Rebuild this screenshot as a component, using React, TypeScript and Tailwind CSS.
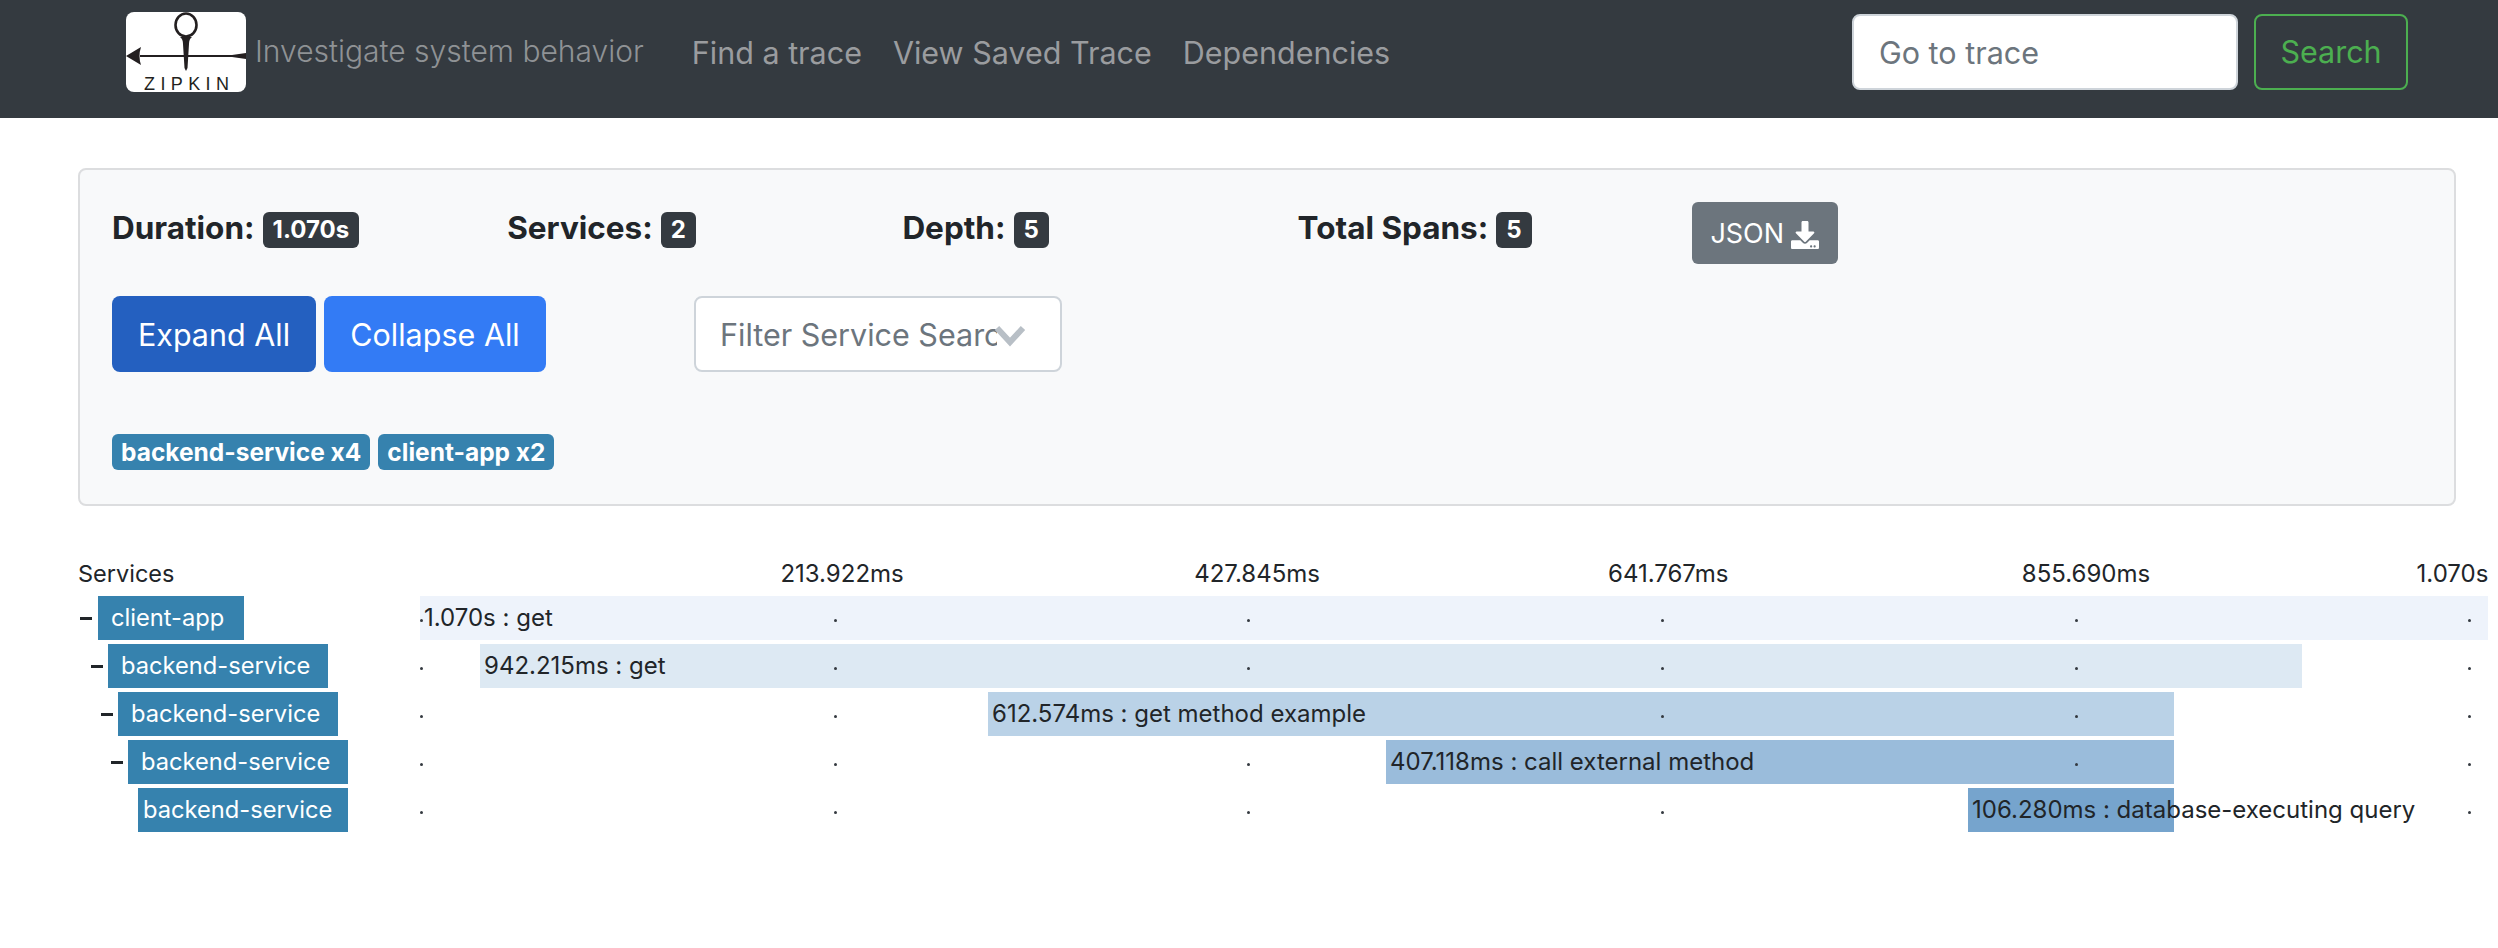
import React from "react";

const font = { fontFamily: "Inter, 'Liberation Sans', sans-serif" };

function Logo() {
  return (
    <div className="w-[120px] h-[80px] bg-white rounded-[8px] shrink-0">
      <svg width="120" height="80" viewBox="0 0 120 80" className="overflow-visible">
        <ellipse cx="60" cy="13" rx="10.5" ry="11.5" fill="none" stroke="#231f20" strokeWidth="2.6" />
        <path d="M54 25 Q57 27 57 32 L58.500 56 L60 59 L61.500 56 L63 32 Q63 27 66 25 Z" fill="#231f20" />
        <path d="M14 43 H106 L120 41 V47 L106 45 H14 Z" fill="#231f20" />
        <path d="M0 44 L15 35 Q12 44 15 53 Z" fill="#231f20" />
        <text x="18" y="78" textLength="85" lengthAdjust="spacing" fontSize="18" fill="#231f20" fontFamily="Liberation Sans, sans-serif">ZIPKIN</text>
      </svg>
    </div>
  );
}

function Stat({ label, value }: { label: string; value: string }) {
  return (
    <div className="w-[395.2px] flex items-center h-[36px] shrink-0">
      <span className="text-[31.5px] font-bold text-[#212529] leading-[36px] mt-[-4px]">{label}</span>
      <span className="ml-[8px] h-[36px] px-[10px] rounded-[6px] bg-[#343a40] text-white text-[24px] font-bold leading-[36px]">{value}</span>
    </div>
  );
}

function Tag({ children }: { children: React.ReactNode }) {
  return <span className="h-[36px] px-[9px] rounded-[6px] bg-[#3682ae] text-white text-[24.5px] font-bold leading-[36px] whitespace-nowrap">{children}</span>;
}

const services = [
  { name: "client-app", minusAt: 2, ml: 20, w: 146, minus: true, pl: 13 },
  { name: "backend-service", minusAt: 13, ml: 30, w: 220, minus: true, pl: 13 },
  { name: "backend-service", minusAt: 23, ml: 40, w: 220, minus: true, pl: 13 },
  { name: "backend-service", minusAt: 33, ml: 50, w: 220, minus: true, pl: 13 },
  { name: "backend-service", minusAt: 0, ml: 60, w: 210, minus: false, pl: 5 },
];

const dotX = [0, 413.7, 827.4, 1241, 1655, 2048];

const bars = [
  { left: 0, w: 2068, color: "#eef3fb", text: "1.070s : get", dots: [0, 1, 2, 3, 4, 5] },
  { left: 60, w: 1822, color: "#dde9f3", text: "942.215ms : get", dots: [0, 1, 2, 3, 4, 5] },
  { left: 568, w: 1186, color: "#bad2e7", text: "612.574ms : get method example", dots: [0, 1, 3, 4, 5] },
  { left: 966, w: 788, color: "#9abcdb", text: "407.118ms : call external method", dots: [0, 1, 2, 4, 5] },
  { left: 1548, w: 206, color: "#76a4cd", text: "106.280ms : database-executing query", dots: [0, 1, 2, 3, 5] },
];

const headers = ["213.922ms", "427.845ms", "641.767ms", "855.690ms"];

export default function App() {
  return (
    <div className="w-[2498px] h-[948px] bg-white overflow-hidden" style={font}>
      <nav className="h-[118px] bg-[#343a40] flex items-start pt-[12px] pl-[126px] pr-[90px]">
        <Logo />
        <span className="ml-[9px] mt-[19px] text-[30px] leading-[40px] font-light text-[#8f9295] whitespace-nowrap">Investigate system behavior</span>
        <div className="ml-[48px] mt-[21px] flex gap-[31px] text-[30.5px] leading-[40px] text-[#9a9c9f] whitespace-nowrap">
          <span>Find a trace</span>
          <span>View Saved Trace</span>
          <span>Dependencies</span>
        </div>
        <div className="ml-auto mt-[2px] flex gap-[16px]">
          <input
            placeholder="Go to trace"
            className="w-[386px] h-[76px] bg-white rounded-[8px] border-2 border-[#ced4da] pl-[25px] pr-[26px] text-[30.5px] placeholder:text-[#6c757d] outline-none"
          />
          <button className="w-[154px] h-[76px] rounded-[8px] border-2 border-[#4caf50] text-[#4caf50] text-[30.5px]">Search</button>
        </div>
      </nav>

      <section className="ml-[78px] mr-[42px] mt-[50px] h-[338px] bg-[#f8f9fa] border-2 border-[#dcdddf] rounded-[8px] pl-[32px] pt-[32px]">
        <div className="flex items-start">
          <div className="flex pt-[10px]">
            <Stat label="Duration:" value="1.070s" />
            <Stat label="Services:" value="2" />
            <Stat label="Depth:" value="5" />
            <Stat label="Total Spans:" value="5" />
          </div>
          <button className="ml-[-1px] w-[146px] h-[62px] rounded-[6px] bg-[#6c757d] text-white text-[27px] flex items-center justify-center gap-[7px] pt-[3px]">
            JSON
            <svg width="28" height="28" viewBox="0 0 512 512" fill="#fff"><path d="M216 0h80c13.3 0 24 10.700 24 24v168h87.700c17.800 0 26.700 21.500 14.100 34.100L269.700 378.300c-7.500 7.500-19.800 7.500-27.300 0L90.100 226.100c-12.600-12.600-3.700-34.100 14.100-34.100H192V24c0-13.300 10.700-24 24-24zm296 376v112c0 13.300-10.700 24-24 24H24c-13.300 0-24-10.700-24-24V376c0-13.300 10.700-24 24-24h146.700l49 49c20.100 20.100 52.500 20.100 72.600 0l49-49H488c13.300 0 24 10.700 24 24zm-124 88c0-11-9-20-20-20s-20 9-20 20 9 20 20 20 20-9 20-20zm64 0c0-11-9-20-20-20s-20 9-20 20 9 20 20 20 20-9 20-20z" /></svg>
          </button>
        </div>

        <div className="flex mt-[32px] items-start">
          <button className="w-[204px] h-[76px] rounded-[8px] bg-[#2460c0] text-white text-[30.5px] pt-[1px]">Expand All</button>
          <button className="ml-[8px] w-[222px] h-[76px] rounded-[8px] bg-[#337bf5] text-white text-[30.5px] pt-[1px]">Collapse All</button>
          <div className="ml-[148px] w-[368px] h-[76px] bg-white border-2 border-[#ced4da] rounded-[8px] pl-[24px] flex items-center relative overflow-hidden">
            <span className="w-[277px] overflow-hidden whitespace-nowrap text-[30.5px] text-[#6c757d] pt-[1px]">Filter Service Search</span>
            <svg className="absolute left-[298px] top-[26px]" width="32" height="24" viewBox="0 0 32 24" fill="none"><path d="M3 4 L16 18 L29 4" stroke="#b8bfc6" strokeWidth="6" /></svg>
          </div>
        </div>

        <div className="flex gap-[8px] mt-[62px]">
          <Tag>backend-service x4</Tag>
          <Tag>client-app x2</Tag>
        </div>
      </section>

      <section className="ml-[78px] mr-[10px] mt-[50px] text-[#212529] text-[24px]">
        <div className="h-[40px] flex items-center leading-[36px] whitespace-nowrap mt-[-2px] mb-[2px]">
          <span className="text-[23.5px]">Services</span>
          <div className="ml-[606px] flex-1 flex">
            {headers.map((h) => (
              <span key={h} className="w-[413.8px] shrink-0">{h}</span>
            ))}
            <span className="ml-[-19px]">1.070s</span>
          </div>
        </div>
        <div className="flex flex-col gap-[4px]">
          {bars.map((b, i) => {
            const s = services[i];
            return (
              <div key={i} className="flex h-[44px] leading-[44px]">
                <div className="w-[342px] shrink-0 flex items-center relative">
                  {s.minus && <span className="absolute h-[3px] w-[12px] bg-[#212529]" style={{ left: s.minusAt }} />}
                  <span className="h-[44px] bg-[#3682ae] text-white text-[23.7px] whitespace-nowrap" style={{ marginLeft: s.ml, width: s.w, paddingLeft: s.pl }}>{s.name}</span>
                </div>
                <div className="flex-1 relative">
                  <div className="h-[44px] pl-[4px] whitespace-nowrap" style={{ marginLeft: b.left, width: b.w, backgroundColor: b.color }}>{b.text}</div>
                  {b.dots.map((d) => (
                    <span key={d} className="absolute top-[23px] w-[3px] h-[3px] rounded-full bg-[#343a40]" style={{ left: dotX[d] }} />
                  ))}
                </div>
              </div>
            );
          })}
        </div>
      </section>
    </div>
  );
}
